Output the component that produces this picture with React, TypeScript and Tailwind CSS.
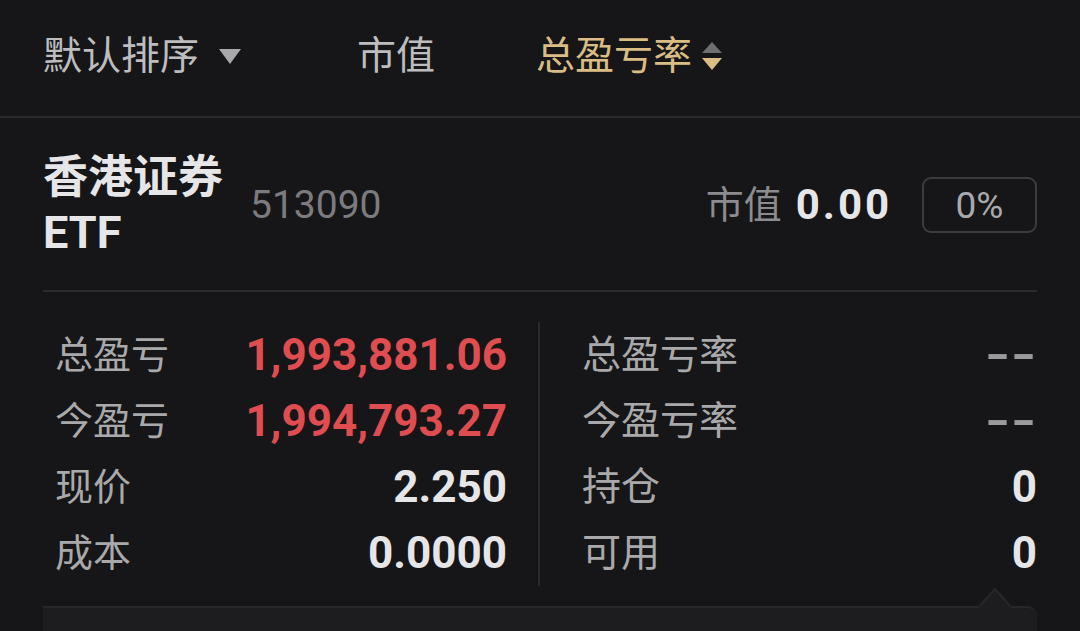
import { ReactNode } from 'react';

function Row({ label, value, valueClass, labelClass }: { label: string; value: string; valueClass: string; labelClass: string }) {
  return (
    <div className="flex h-[66px] items-center justify-between">
      <span className={`leading-none text-[#a9a9ab] ${labelClass}`}>{label}</span>
      <span className={`text-[44px] font-bold leading-none ${valueClass}`}>{value}</span>
    </div>
  );
}

function Column({ children, className }: { children: ReactNode; className: string }) {
  return <div className={`flex flex-col ${className}`}>{children}</div>;
}

export default function App() {
  return (
    <div className="h-[631px] w-[1080px] overflow-hidden bg-[#161618] font-[Roboto,'Noto_Sans_CJK_SC',sans-serif]">

      {/* Sort bar */}
      <div className="flex h-[118px] items-center border-b-2 border-[#2a2a2d] pb-[4px] pl-[43px]">
        <div className="flex w-[314px] items-center">
          <span className="text-[39px] leading-none text-[#bdbdbf]">默认排序</span>
          <svg width="22" height="15" viewBox="0 0 22 15" className="ml-[20px]">
            <path d="M0 0 H22 L11 15 Z" fill="#a9a9ab" />
          </svg>
        </div>
        <div className="w-[179px]">
          <span className="text-[39px] leading-none text-[#bdbdbf]">市值</span>
        </div>
        <div className="flex items-center">
          <span className="text-[39px] leading-none text-[#d9bd84]">总盈亏率</span>
          <svg width="20" height="28" viewBox="0 0 20 28" className="ml-[10px]">
            <path d="M10 0 L20 11 H0 Z" fill="#6e6e70" />
            <path d="M0 16 H20 L10 28 Z" fill="#d9bd84" />
          </svg>
        </div>
      </div>

      {/* Position card */}
      <div className="px-[43px] pt-[32px]">
        <div className="flex items-center">
          <div className="w-[207px] text-[45px] font-bold leading-[55px] text-[#e6e6e8]">
            <div>香港证券</div>
            <div>ETF</div>
          </div>
          <span className="text-[39px] leading-none text-[#7c7c80]">513090</span>
          <div className="ml-auto flex items-center">
            <span className="text-[38px] leading-none text-[#8c8c90]">市值</span>
            <span className="ml-[14px] text-[42px] font-bold leading-none tracking-[0.07em] text-[#e6e6e8]">0.00</span>
            <div className="ml-[30px] flex h-[56px] w-[115px] items-center justify-center rounded-[9px] border-2 border-[#3c3c40]">
              <span className="text-[37px] leading-none text-[#a9a9ab]">0%</span>
            </div>
          </div>
        </div>

        <div className="mt-[30px] h-[2px] bg-[#2b2b2e]" />

        {/* Detail grid */}
        <div className="flex pt-[30px]">
          <Column className="w-[497px] border-r-2 border-[#2b2b2e] pl-[12px] pr-[31px]">
            <Row label="总盈亏" value="1,993,881.06" labelClass="text-[38px]" valueClass="text-[#df4d50]" />
            <Row label="今盈亏" value="1,994,793.27" labelClass="text-[38px]" valueClass="text-[#df4d50]" />
            <Row label="现价" value="2.250" labelClass="text-[38px]" valueClass="text-[#e6e6e8]" />
            <Row label="成本" value="0.0000" labelClass="text-[38px]" valueClass="text-[#e6e6e8]" />
          </Column>
          <Column className="flex-1 pl-[42px]">
            <Row label="总盈亏率" value="--" labelClass="text-[39px]" valueClass="inline-block origin-right scale-x-150 text-[#9a9a9c]" />
            <Row label="今盈亏率" value="--" labelClass="text-[39px]" valueClass="inline-block origin-right scale-x-150 text-[#9a9a9c]" />
            <Row label="持仓" value="0" labelClass="text-[39px]" valueClass="text-[#e6e6e8]" />
            <Row label="可用" value="0" labelClass="text-[39px]" valueClass="text-[#e6e6e8]" />
          </Column>
        </div>

        {/* Popover panel */}
        <div className="relative mt-[20px] h-[60px] rounded-tr-[10px] border-t-2 border-[#28282b] bg-[#1d1d20]">
          <svg width="34" height="20" viewBox="0 0 34 20" className="absolute right-[25px] top-[-20px]">
            <path d="M0 20 L17 1 L34 20 Z" fill="#1d1d20" stroke="#28282b" strokeWidth="2" />
            <rect x="1" y="18" width="32" height="4" fill="#1d1d20" />
          </svg>
        </div>
      </div>
    </div>
  );
}
